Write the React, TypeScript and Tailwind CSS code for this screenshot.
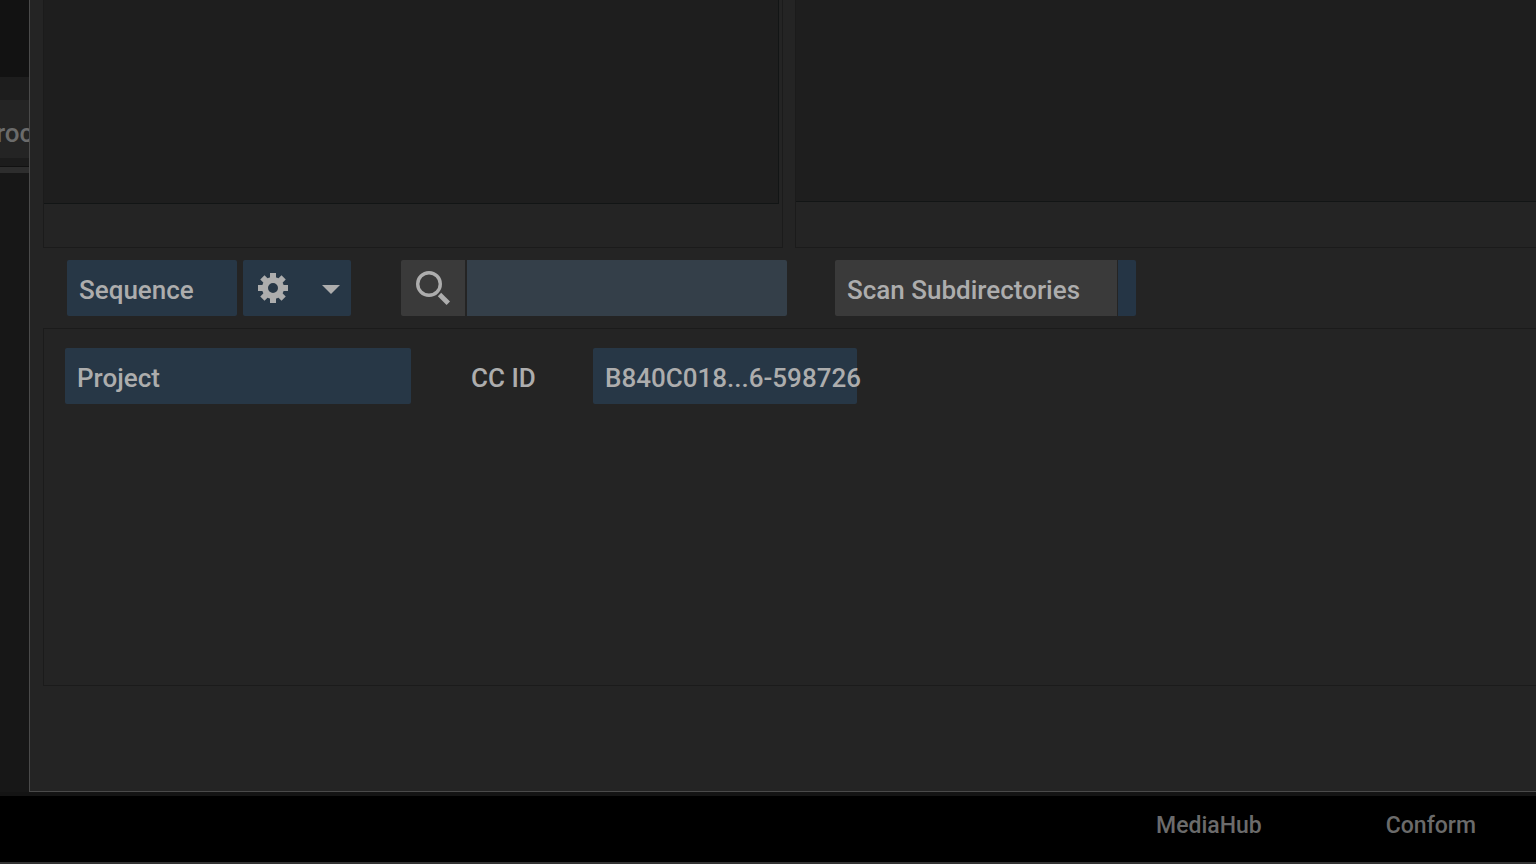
import type { ButtonHTMLAttributes } from 'react';
import clsx from 'clsx';

interface FlatButtonProps extends ButtonHTMLAttributes<HTMLButtonElement> {
  tone?: 'blue' | 'gray';
  icon?: boolean;
}

function FlatButton({ tone = 'blue', icon = false, className, ...props }: FlatButtonProps) {
  return (
    <button
      type="button"
      className={clsx(
        'flex h-14 shrink-0 items-center text-left whitespace-nowrap',
        tone === 'blue' ? 'rounded-xs bg-[#273746]' : 'rounded-l-xs bg-[#3a3a3a]',
        !icon && 'px-3 pt-1',
        className
      )}
      {...props}
    />
  );
}

function GearIcon() {
  return (
    <svg width="30" height="30" viewBox="-15 -15 30 30" fill="#adadad" aria-hidden="true">
      <path
        fillRule="evenodd"
        d="M-11 0a11 11 0 1 0 22 0a11 11 0 1 0-22 0ZM-5 0a5 5 0 1 1 10 0a5 5 0 1 1-10 0Z"
      />
      {[0, 45, 90, 135, 180, 225, 270, 315].map((angle) => (
        <rect key={angle} x="-3" y="-15" width="6" height="6" transform={`rotate(${angle})`} />
      ))}
    </svg>
  );
}

function SearchIcon() {
  return (
    <svg width="34" height="34" viewBox="0 0 34 34" fill="none" stroke="#adadad" aria-hidden="true">
      <circle cx="13" cy="13" r="11.3" strokeWidth="3.4" />
      <path d="M23.5 23.5L32.3 32.3" strokeWidth="4.8" />
    </svg>
  );
}

function Toolbar() {
  return (
    <div className="flex py-3 pl-6">
      <FlatButton className="w-[170px]">Sequence</FlatButton>
      <FlatButton icon className="ml-1.5 w-[108px] justify-between pr-[11px] pl-[15px]" aria-label="Sequence options">
        <GearIcon />
        <svg width="18" height="11" viewBox="0 0 18 11" fill="#adadad" aria-hidden="true">
          <path d="M0 2H18L9 11Z" />
        </svg>
      </FlatButton>

      <div className="ml-[50px] flex gap-0.5">
        <FlatButton tone="gray" icon className="w-16 justify-center" aria-label="Search">
          <SearchIcon />
        </FlatButton>
        <input
          type="text"
          aria-label="Search text"
          className="h-14 w-80 rounded-r-xs bg-[#343f49] px-3 outline-none"
        />
      </div>

      <button
        type="button"
        aria-pressed="true"
        className="ml-12 flex h-14 shrink-0 gap-px overflow-hidden rounded-xs text-left whitespace-nowrap"
      >
        <span className="flex h-full w-[282px] items-center bg-[#3a3a3a] px-3 pt-1">Scan Subdirectories</span>
        <span className="h-full w-[18px] bg-[#253545]" />
      </button>
    </div>
  );
}

export default function App() {
  return (
    <div className="flex h-screen flex-col overflow-hidden bg-[#141414] font-['Roboto',sans-serif] text-[26px] leading-8 font-medium text-[#adadad]">
      <div className="flex min-h-0 flex-1">
        {/* sliver of the window behind the dialog */}
        <aside className="w-[29px] shrink-0 overflow-hidden bg-[#171717] text-[#6b6b6b]">
          <div className="h-[77px] bg-[#121212]" />
          <div className="h-[23px] bg-[#1d1d1d]" />
          <div className="flex h-[58px] items-center justify-center bg-[#242424] pt-2">roc</div>
          <div className="h-2 bg-[#1c1c1c]" />
          <div className="h-[7px] border-t border-[#111111] bg-[#2d2d2d]" />
        </aside>

        <main className="flex min-w-0 flex-1 flex-col border-b border-l border-[#4a4a4a] bg-[#242424] pl-[13px]">
          <div className="flex min-h-0 flex-1 gap-3">
            <section className="w-[740px] shrink-0 border-r border-b border-l border-[#1b1b1b] pr-[3px] pb-[43px]">
              <div className="h-full border-r border-b border-[#121515] bg-[#1e1e1e]" />
            </section>
            <section className="flex-1 border-b border-l border-[#1b1b1b] pb-[45px]">
              <div className="h-full border-b border-[#121515] bg-[#1e1e1e]" />
            </section>
          </div>

          <Toolbar />

          <section className="flex h-[358px] items-start border-y border-l border-[#1b1b1b] pt-[19px] pl-[21px]">
            <FlatButton className="w-[346px]">Project</FlatButton>
            <label htmlFor="cc-id" className="ml-[60px] flex h-14 w-[122px] items-center pt-1">
              CC ID
            </label>
            <FlatButton id="cc-id" className="w-[264px]">
              B840C018...6-598726
            </FlatButton>
          </section>
          <div className="h-[105px]" />
        </main>
      </div>

      <nav className="mt-1 flex h-[68px] items-center justify-end gap-[124px] border-b-2 border-[#333333] bg-black pr-[60px] pb-1.5 text-[23px] text-[#6b6b6b]">
        <button type="button">MediaHub</button>
        <button type="button">Conform</button>
      </nav>
    </div>
  );
}
